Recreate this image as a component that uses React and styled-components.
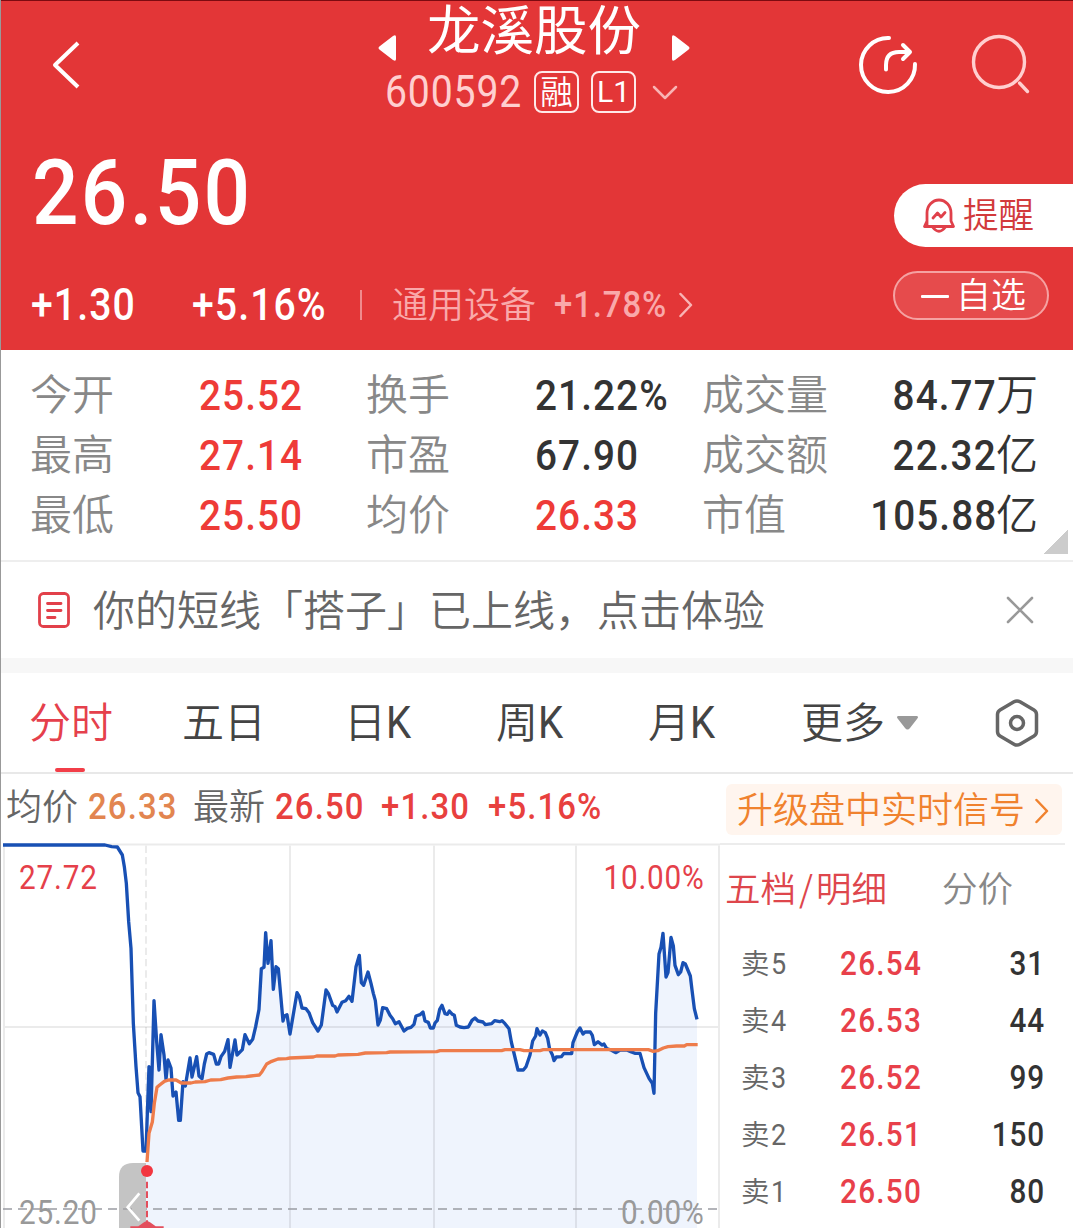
import styled, { createGlobalStyle } from 'styled-components';

const stats = [
    ['今开', '25.52', true, '换手', '21.22%', false, '成交量', '84.77', '万'],
    ['最高', '27.14', true, '市盈', '67.90', false, '成交额', '22.32', '亿'],
    ['最低', '25.50', true, '均价', '26.33', true, '市值', '105.88', '亿'],
];

const tabs = [
    { name: '分时', width: 153, active: true },
    { name: '五日', width: 162 },
    { name: '日', letter: 'K', width: 152 },
    { name: '周', letter: 'K', width: 152 },
    { name: '月', letter: 'K', width: 153 },
    { name: '更多', width: 96 },
];

const orders = [
    ['5', '26.54', '31'],
    ['4', '26.53', '44'],
    ['3', '26.52', '99'],
    ['2', '26.51', '150'],
    ['1', '26.50', '80'],
];

// three units to a pixel
const price = '9,15 315,15 335,20 352,21 367,45 373,80 379,130 386,245 393,325 400,550 408,680 414,758 420,770 429,933 438,933 447,680 453,815 462,482 470,605 477,690 483,584 492,645 498,718 504,660 513,684 519,768 528,756 536,841 541,841 549,725 556,738 570,654 576,711 590,650 597,708 606,716 613,672 620,642 627,638 641,643 649,672 656,672 663,650 674,634 684,599 690,682 705,600 711,645 727,629 735,584 748,611 758,598 767,560 777,508 784,386 792,382 797,278 804,370 813,302 820,448 828,380 835,386 849,543 853,528 861,524 870,582 891,458 898,470 906,504 918,506 927,518 938,548 954,573 964,555 978,450 985,460 998,496 1005,500 1011,516 1026,487 1037,482 1047,469 1056,484 1068,380 1078,346 1084,428 1091,436 1104,396 1113,430 1120,460 1126,482 1134,555 1141,540 1148,503 1160,506 1170,526 1178,536 1186,551 1197,545 1212,573 1222,565 1233,562 1242,553 1248,528 1260,524 1269,516 1275,543 1285,547 1291,564 1300,564 1305,549 1312,541 1319,508 1326,496 1335,521 1342,523 1348,513 1357,523 1363,526 1369,556 1380,561 1392,563 1405,561 1416,541 1425,534 1434,543 1449,546 1456,554 1475,551 1484,542 1499,545 1506,542 1515,551 1527,566 1534,606 1554,690 1570,690 1578,680 1590,645 1598,603 1607,588 1611,566 1620,585 1627,573 1636,578 1643,595 1649,628 1657,644 1662,662 1669,651 1684,650 1692,640 1715,641 1719,608 1732,576 1740,564 1749,582 1755,576 1771,576 1777,586 1783,614 1794,605 1806,615 1812,612 1820,626 1833,630 1848,638 1860,630 1880,630 1894,636 1906,640 1920,640 1932,683 1947,715 1957,730 1962,760 1967,520 1977,342 1983,322 1989,280 1998,411 2004,398 2013,292 2020,318 2025,376 2035,404 2042,396 2049,368 2056,372 2071,408 2076,450 2083,506 2091,538';
const average = '441,966 447,880 457,846 463,790 471,742 479,735 493,724 506,720 528,720 544,729 573,729 586,726 615,725 632,720 662,719 684,714 710,711 738,710 752,708 778,705 786,695 800,672 815,664 834,657 860,656 870,654 940,651 950,648 1005,648 1014,645 1074,643 1096,639 1160,638 1170,636 1310,635 1320,632 1505,632 1515,629 1560,629 1572,632 1620,632 1630,629 1945,629 1960,634 1973,632 1990,624 2004,620 2030,618 2053,618 2060,614 2093,614';

function App() {
    return (
        <Page>
            <GlobalStyle />
            <Hero>
                <Nav>
                    <BackIcon viewBox="0 0 30 52"><path d="M27 4 L4 26 L27 48" /></BackIcon>
                    <Stock>
                        <Arrow viewBox="0 0 18 26"><path d="M18 2 Q18 -1 15 1 L2 11 Q-1 13 2 15 L15 25 Q18 27 18 24 Z" /></Arrow>
                        <StockInfo>
                            <StockName>龙溪股份</StockName>
                            <CodeRow>
                                <Code>600592</Code>
                                <Tag>融</Tag>
                                <Tag $latin>L1</Tag>
                                <DownIcon viewBox="0 0 26 16"><path d="M2 2 L13 13 L24 2" /></DownIcon>
                            </CodeRow>
                        </StockInfo>
                        <Arrow viewBox="0 0 18 26"><path d="M0 2 Q0 -1 3 1 L16 11 Q19 13 16 15 L3 25 Q0 27 0 24 Z" /></Arrow>
                    </Stock>
                    <ShareIcon viewBox="0 0 60 60">
                        <path d="M31 3 A27 27 0 1 0 57 29" />
                        <path d="M28 34.500 V30 Q28 17 41 17 H52 M45 10 L52 17 L45 24" />
                    </ShareIcon>
                    <SearchIcon viewBox="0 0 60 60">
                        <circle cx="28" cy="28" r="25.500" />
                        <path d="M48.500 49 L56.500 57.500" />
                    </SearchIcon>
                </Nav>
                <PriceRow>
                    <Price>26.50</Price>
                    <Remind>
                        <BellIcon viewBox="0 0 34 36">
                            <path d="M5 28 V15 A12 13 0 0 1 29 15 V23 L31.500 28.500 H2.500 L5 23" />
                            <path d="M10.500 29 Q17 37.500 23.500 29" />
                            <path d="M11 20 L15.500 15 L19 19 L23 14.500" />
                        </BellIcon>
                        提醒
                    </Remind>
                </PriceRow>
                <ChangeRow>
                    <Change $width={161}>+1.30</Change>
                    <Change $width={168}>+5.16%</Change>
                    <Separator />
                    <Sector>通用设备</Sector>
                    <SectorChange>+1.78%</SectorChange>
                    <RightIcon viewBox="0 0 14 26"><path d="M1.500 2 L12 13 L1.500 24" /></RightIcon>
                    <Watch><Dash />自选</Watch>
                </ChangeRow>
            </Hero>
            <Stats>
                {stats.map(([a, av, aUp, b, bv, bUp, c, cv, unit]) => (
                    <StatRow key={a}>
                        <Label>{a}</Label>
                        <Value $up={aUp}>{av}</Value>
                        <Label>{b}</Label>
                        <Value $up={bUp}>{bv}</Value>
                        <Label>{c}</Label>
                        <Total><TotalNumber>{cv}</TotalNumber>{unit}</Total>
                    </StatRow>
                ))}
                <Corner />
            </Stats>
            <Notice>
                <NoticeIcon viewBox="0 0 32 36">
                    <rect x="1.500" y="1.500" width="29" height="33" rx="4" />
                    <path d="M9.500 11.500 H23 M9.500 18.500 H23 M9.500 25.500 H17" />
                </NoticeIcon>
                <NoticeText>你的短线「搭子」已上线，点击体验</NoticeText>
                <CloseIcon viewBox="0 0 28 28"><path d="M2 2 L26 26 M26 2 L2 26" /></CloseIcon>
            </Notice>
            <Tabs>
                {tabs.map((tab) => (
                    <Tab key={tab.name} $width={tab.width} $active={tab.active}>
                        {tab.name}{tab.letter && <Letter>{tab.letter}</Letter>}
                    </Tab>
                ))}
                <Caret viewBox="0 0 21 14"><path d="M1 0 H20 Q22 1 20 3 L13 12 Q10.500 15 8 12 L1 3 Q-1 1 1 0 Z" /></Caret>
                <SettingIcon viewBox="0 0 44 48">
                    <path d="M19 2.800 Q22 1 25 2.800 L39 11 Q41.500 12.500 41.500 15.500 V32.500 Q41.500 35.500 39 37 L25 45.200 Q22 47 19 45.200 L5 37 Q2.500 35.500 2.500 32.500 V15.500 Q2.500 12.500 5 11 Z" />
                    <circle cx="22" cy="24" r="6.500" />
                </SettingIcon>
            </Tabs>
            <Info>
                <InfoLabel>均价</InfoLabel>
                <InfoValue $width={105} $average>26.33</InfoValue>
                <InfoLabel>最新</InfoLabel>
                <InfoValue $width={106}>26.50</InfoValue>
                <InfoValue $width={107}>+1.30</InfoValue>
                <InfoValue $width={120}>+5.16%</InfoValue>
                <Signal>
                    升级盘中实时信号
                    <SignalArrow viewBox="0 0 14 26"><path d="M1.500 2 L12 13 L1.500 24" /></SignalArrow>
                </Signal>
            </Info>
            <Bottom>
                <Chart viewBox="0 9 2160 1155">
                    <path d={`M438,1164 L${price.split(' ').slice(14).join(' L')} V1164 Z`} fill="#eff4fd" />
                    <g stroke="#000" strokeOpacity="0.08" strokeWidth="6" fill="none">
                        <path d="M9 13.500 H2160 M12 13 V1164 M870 17 V1164 M1302 17 V1164 M1728 17 V1164 M2157 17 V1164 M15 561 H2155" />
                        <path d="M438 17 V930" strokeDasharray="22 12" />
                    </g>
                    <ScaleText transform="translate(57 147) scale(0.9 1)" $up>27.72</ScaleText>
                    <ScaleText transform="translate(2114 147) scale(0.9 1)" $up textAnchor="end">10.00%</ScaleText>
                    <ScaleText transform="translate(57 1151) scale(0.9 1)">25.20</ScaleText>
                    <ScaleText transform="translate(2114 1151) scale(0.9 1)" textAnchor="end">0.00%</ScaleText>
                    <path d="M9 1107 H2160" stroke="#9b9ca3" strokeWidth="5" strokeDasharray="27 18" />
                    <polyline points={price} fill="none" stroke="#1850b4" strokeWidth="10" strokeLinejoin="round" />
                    <path d="M357 1164 V1011 Q357 969 399 969 H438 V1164 Z" fill="#c4c4c4" />
                    <path d="M369 1107 H396" stroke="#a4a4a8" strokeWidth="5" />
                    <path d="M418 1060 L383 1102 L418 1142" fill="none" stroke="#fff" strokeWidth="8" />
                    <polyline points={average} fill="none" stroke="#ee7c4b" strokeWidth="10" strokeLinejoin="round" />
                    <path d="M441 1025 V1150" stroke="#e34e5c" strokeWidth="6" strokeDasharray="20 9" />
                    <path d="M391 1164 V1159 H415 L432 1147 Q441 1141 450 1147 L467 1159 H491 V1164 Z" fill="#e34e5c" />
                    <circle cx="441" cy="993" r="18" fill="#f23640" />
                </Chart>
                <Book>
                    <BookTabs>
                        <BookTab $active>五档<Slash>/</Slash>明细</BookTab>
                        <BookTab>分价</BookTab>
                    </BookTabs>
                    {orders.map(([level, value, amount]) => (
                        <Order key={level}>
                            <Level>卖<LevelNumber>{level}</LevelNumber></Level>
                            <OrderPrice>{value}</OrderPrice>
                            <Amount>{amount}</Amount>
                        </Order>
                    ))}
                </Book>
            </Bottom>
        </Page>
    );
}

export default App;

const GlobalStyle = createGlobalStyle`
    * {
        box-sizing: border-box;
    }
    body {
        margin: 0;
        background-color: #FFFFFF;
        font-family: 'Noto Sans CJK SC', sans-serif;
        font-weight: 350;
    }
    svg {
        display: block;
        flex-shrink: 0;
    }
`

const Page = styled.main`
    width: 1073px;
    height: 1228px;
    overflow: hidden;
    white-space: nowrap;
    border-left: 1px solid #999999;
`

const Icon = styled.svg`
    fill: none;
    stroke: #FFFFFF;
    stroke-width: 4;
    stroke-linecap: round;
    stroke-linejoin: round;
`

// narrow digits, spaced out a little
const Digits = styled.span`
    display: inline-block;
    flex-shrink: 0;
    font-family: Roboto, sans-serif;
    font-weight: 500;
    letter-spacing: 0.028em;
    transform: scaleX(0.9);
    transform-origin: left center;
`

const Hero = styled.header`
    height: 350px;
    margin-left: -1px;
    background-color: #E33637;
    border-top: 1px solid #7C0A10;
    border-left: 1px solid #A82329;
`

const Nav = styled.nav`
    height: 130px;
    display: flex;
    align-items: flex-start;
`

const BackIcon = styled(Icon)`
    width: 30px;
    height: 52px;
    margin: 38px 0 0 50px;
    stroke-linecap: butt;
`

const Stock = styled.div`
    width: 312px;
    margin-left: 297px;
    display: flex;
    align-items: flex-start;
    justify-content: space-between;
`

const Arrow = styled.svg`
    width: 18px;
    height: 26px;
    margin-top: 34px;
    fill: #FFFFFF;
`

const StockInfo = styled.div`
    width: 276px;
    display: flex;
    flex-direction: column;
    align-items: center;
`

const StockName = styled.h1`
    height: 70px;
    margin: 0;
    font-size: 53.5px;
    line-height: 51px;
    font-weight: 400;
    color: #FFFFFF;
`

const CodeRow = styled.div`
    width: 298px;
    height: 43px;
    display: flex;
    align-items: center;
`

const Code = styled(Digits)`
    width: 149px;
    font-size: 43.5px;
    line-height: 43px;
    font-weight: 400;
    letter-spacing: 0.022em;
    color: #FFCFCF;
`

const Tag = styled.span`
    width: 45px;
    height: 42px;
    margin: 0 12px 1px 0;
    padding-bottom: ${(props) => (props.$latin ? 1 : 5)}px;
    flex-shrink: 0;
    border: 2px solid #FFE9E9;
    border-radius: 8px;
    display: flex;
    justify-content: center;
    align-items: center;
    font-family: ${(props) => (props.$latin ? 'Roboto' : "'Noto Sans CJK SC'")}, sans-serif;
    font-size: ${(props) => (props.$latin ? 30 : 32.5)}px;
    font-weight: ${(props) => (props.$latin ? 400 : 350)};
    line-height: 36px;
    color: #FFFFFF;
`

const DownIcon = styled(Icon)`
    width: 26px;
    height: 16px;
    margin-left: 4px;
    stroke: #F9B4B4;
    stroke-width: 2.5;
`

const ShareIcon = styled(Icon)`
    width: 60px;
    height: 60px;
    margin: 34px 0 0 168px;
`

const SearchIcon = styled(Icon)`
    width: 60px;
    height: 60px;
    margin: 33px 0 0 53px;
    stroke: #FFCFCF;
    stroke-width: 3.4;
`

const PriceRow = styled.div`
    height: 140px;
    display: flex;
    justify-content: space-between;
`

const Price = styled(Digits)`
    margin-left: 31px;
    font-size: 91px;
    line-height: 124px;
    color: #FFFFFF;
`

const Remind = styled.button`
    width: 179px;
    height: 63px;
    margin-top: 53px;
    padding: 0 0 0 28px;
    border: none;
    border-radius: 32px 0 0 32px;
    background-color: #FFFFFF;
    display: flex;
    align-items: flex-start;
    font-family: inherit;
    font-size: 35.5px;
    line-height: 57px;
    font-weight: 350;
    color: #D23A3C;
`

const BellIcon = styled(Icon)`
    width: 34px;
    height: 36px;
    margin: 14px 7px 0 0;
    stroke: #E0404A;
    stroke-width: 2.8;
`

const ChangeRow = styled.div`
    height: 50px;
    padding-left: 30px;
    display: flex;
    align-items: center;
`

const Change = styled(Digits)`
    width: ${(props) => props.$width}px;
    margin-top: 20px;
    font-size: 43.5px;
    line-height: 50px;
    color: #FFFFFF;
`

const Separator = styled.div`
    width: 2px;
    height: 30px;
    margin-top: 18px;
    background-color: #F08A8C;
`

const Sector = styled.span`
    width: 162px;
    margin: 12px 0 0 30px;
    font-size: 36px;
    line-height: 50px;
    color: #F9A9AA;
`

const SectorChange = styled(Digits)`
    width: 125px;
    margin-top: 18px;
    font-size: 36.5px;
    line-height: 50px;
    color: #F9A9AA;
`

const RightIcon = styled(Icon)`
    width: 14px;
    height: 26px;
    margin-top: 18px;
    stroke: #F9B4B4;
    stroke-width: 2.5;
`

const Watch = styled.button`
    width: 156px;
    height: 49px;
    margin: 0 0 1px 200px;
    padding: 0 0 0 26px;
    flex-shrink: 0;
    border: 2px solid #F5A2A2;
    border-radius: 25px;
    background-color: #E64B4C;
    display: flex;
    align-items: flex-start;
    font-family: inherit;
    font-size: 35px;
    line-height: 40px;
    font-weight: 350;
    color: #FFFFFF;
`

const Dash = styled.i`
    width: 28px;
    height: 3px;
    margin: 22px 7px 0 0;
    border-radius: 1px;
    background-color: #FFFFFF;
`

const Stats = styled.section`
    position: relative;
    height: 212px;
    padding: 15px 35px 0 29px;
    border-bottom: 2px solid #EEEEEE;
`

const StatRow = styled.div`
    height: 60px;
    display: grid;
    grid-template-columns: 168px 168px 168px 168px 125px 1fr;
`

const Label = styled.span`
    font-size: 42px;
    line-height: 54px;
    color: #888888;
`

const Value = styled(Digits)`
    margin-left: 1px;
    font-size: 43px;
    line-height: 60px;
    color: ${(props) => (props.$up ? '#EE3B37' : '#333333')};
`

const Total = styled.span`
    font-size: 42px;
    line-height: 54px;
    text-align: right;
    color: #333333;
`

const TotalNumber = styled(Digits)`
    margin-right: -1px;
    font-size: 43px;
    transform-origin: right center;
`

const Corner = styled.i`
    position: absolute;
    right: 5px;
    bottom: 6px;
    width: 24px;
    height: 24px;
    background: linear-gradient(135deg, transparent 50%, #CCCCCC 50%);
`

const Notice = styled.section`
    height: 96px;
    padding: 0 39px 0 37px;
    display: flex;
    align-items: center;
`

const NoticeIcon = styled(Icon)`
    width: 32px;
    height: 36px;
    stroke: #E2404A;
    stroke-width: 2.8;
`

const NoticeText = styled.p`
    flex: 1;
    margin: 0 0 4px 23px;
    font-size: 42px;
    line-height: 60px;
    color: #666666;
`

const CloseIcon = styled(Icon)`
    width: 28px;
    height: 28px;
    stroke: #999999;
    stroke-width: 2.6;
`

const Tabs = styled.nav`
    height: 116px;
    padding: 0 0 0 28px;
    border-top: 15px solid #F7F7F7;
    border-bottom: 2px solid #E8E8E8;
    display: flex;
    align-items: center;
`

const Tab = styled.span`
    width: ${(props) => props.$width}px;
    height: 99px;
    font-size: 42px;
    line-height: 94px;
    color: ${(props) => (props.$active ? '#E5404C' : '#444444')};
    &::after {
        content: '';
        display: ${(props) => (props.$active ? 'block' : 'none')};
        width: 30px;
        height: 4px;
        margin-top: 1px;
        margin-left: 26px;
        border-radius: 2px;
        background-color: #F23E48;
    }
`

const Letter = styled(Digits)`
    font-size: 44.5px;
    line-height: 60px;
    font-weight: 400;
`

const Caret = styled.svg`
    width: 21px;
    height: 14px;
    fill: #999999;
`

const SettingIcon = styled(Icon)`
    width: 44px;
    height: 48px;
    margin-left: 77px;
    stroke: #666666;
    stroke-width: 3.5;
`

const Info = styled.section`
    height: 69px;
    padding: 0 11px 0 5px;
    display: flex;
    align-items: center;
`

const InfoLabel = styled.span`
    width: 82px;
    margin-bottom: 9px;
    font-size: 36px;
    line-height: 50px;
    color: #666666;
`

const InfoValue = styled(Digits)`
    width: ${(props) => props.$width}px;
    margin-bottom: 4px;
    font-size: 36.5px;
    line-height: 50px;
    letter-spacing: 0.035em;
    color: ${(props) => (props.$average ? '#E28550' : '#E8403E')};
`

const Signal = styled.button`
    width: 336px;
    height: 51px;
    margin: 2px 0 0 auto;
    padding: 0 0 0 11px;
    border: none;
    border-radius: 6px;
    background-color: #FFF5EE;
    display: flex;
    align-items: flex-start;
    font-family: inherit;
    font-size: 36px;
    line-height: 46px;
    font-weight: 350;
    color: #F0822E;
`

const SignalArrow = styled(Icon)`
    width: 14px;
    height: 26px;
    margin: 14px 0 0 10px;
    stroke: #F0822E;
    stroke-width: 2.5;
`

const Bottom = styled.section`
    height: 385px;
    margin-left: -1px;
    display: flex;
`

const Chart = styled.svg`
    width: 720px;
    height: 385px;
`

const ScaleText = styled.text`
    font-family: Roboto, sans-serif;
    font-size: 99px;
    font-weight: 400;
    letter-spacing: 0.028em;
    fill: ${(props) => (props.$up ? '#E5404A' : '#999999')};
`

const Book = styled.div`
    width: 345px;
    border-top: 2px solid #ECECEC;
`

const BookTabs = styled.div`
    height: 91px;
    padding-left: 5px;
    display: flex;
    gap: 55px;
`

const BookTab = styled.span`
    font-size: 35.5px;
    line-height: 84px;
    color: ${(props) => (props.$active ? '#DE464C' : '#888888')};
`

const Slash = styled.span`
    display: inline-block;
    width: 20px;
    text-align: center;
`

const Order = styled.div`
    height: 57px;
    padding-left: 21px;
    display: grid;
    grid-template-columns: 99px 100px 105px;
`

const Level = styled.span`
    font-size: 28.5px;
    line-height: 52px;
    color: #666666;
`

const LevelNumber = styled(Digits)`
    margin-left: 1px;
    font-size: 30px;
    line-height: 52px;
    font-weight: 400;
`

const OrderPrice = styled(Digits)`
    font-size: 33px;
    line-height: 56px;
    letter-spacing: 0.042em;
    color: #E8404A;
`

const Amount = styled(Digits)`
    font-size: 33px;
    line-height: 56px;
    text-align: right;
    transform-origin: right center;
    color: #333333;
`
